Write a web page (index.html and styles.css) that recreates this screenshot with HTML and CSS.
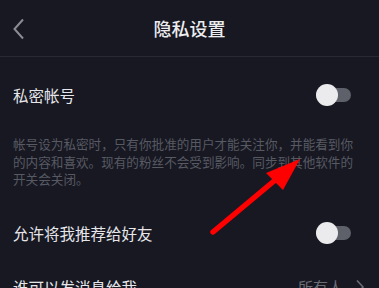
FILE: index.html
```html
<!DOCTYPE html>
<html lang="zh">
<head>
<meta charset="utf-8">
<link rel="stylesheet" href="styles.css">
</head>
<body>
<div class="page">
  <header class="topbar">
    <svg class="back" width="14" height="22" viewBox="0 0 14 22"><path d="M11 1.5 L2.5 11 L11 20.5" fill="none" stroke="#8b8c93" stroke-width="2"/></svg>
    <div class="title">隐私设置</div>
  </header>
  <div class="row first">
    <span class="label">私密帐号</span>
    <span class="toggle"><span class="knob"></span></span>
  </div>
  <p class="desc">帐号设为私密时，只有你批准的用户才能关注你，并能看到你的内容和喜欢。现有的粉丝不会受到影响。同步到其他软件的开关会关闭。</p>
  <div class="row second">
    <span class="label">允许将我推荐给好友</span>
    <span class="toggle"><span class="knob"></span></span>
  </div>
  <div class="row third">
    <span class="label">谁可以发消息给我</span>
    <span class="value">所有人<svg class="chev" width="10" height="16" viewBox="0 0 10 16"><path d="M2 1.5 L8 8 L2 14.5" fill="none" stroke="#6b6d75" stroke-width="1.6"/></svg></span>
  </div>
  <svg class="arrow" width="379" height="288" viewBox="0 0 379 288">
    <line x1="213" y1="232" x2="280" y2="176" stroke="#ff0000" stroke-width="5.5" stroke-linecap="round"/>
    <polygon points="300,159 266,173 283,190" fill="#ff0000"/>
  </svg>
</div>
</body>
</html>
```
FILE: styles.css
```css
html, body {
  margin: 0;
  padding: 0;
  background: #171822;
}
.page {
  position: relative;
  width: 379px;
  height: 288px;
  overflow: hidden;
  background: #171822;
  font-family: "Noto Sans CJK SC", "Noto Sans", sans-serif;
}
.topbar {
  position: relative;
  height: 56px;
  border-bottom: 1px solid #282a33;
  display: flex;
  align-items: center;
  justify-content: center;
}
.back {
  position: absolute;
  left: 12px;
  top: 18px;
}
.title {
  color: #ededf0;
  font-size: 18px;
  font-weight: 500;
}
.row {
  display: flex;
  align-items: center;
  justify-content: space-between;
  height: 40px;
  padding: 0 28px 0 13px;
}
.row.first { margin-top: 18px; }
.row.second { margin-top: 25px; }
.row.third { margin-top: 14px; padding-right: 14px; }
.label {
  color: #e6e6ea;
  font-size: 15.5px;
}
.toggle {
  position: relative;
  width: 35px;
  height: 14px;
  border-radius: 7px;
  background: #5f616a;
  display: inline-block;
}
.knob {
  position: absolute;
  left: 0;
  top: -4px;
  width: 22px;
  height: 22px;
  border-radius: 50%;
  background: #ebebed;
}
.desc {
  margin: 20px 0 0 0;
  padding: 0 24px 0 13px;
  color: #585a63;
  font-size: 12.6px;
  line-height: 17.5px;
}
.value {
  color: #6b6d75;
  font-size: 15px;
  display: flex;
  align-items: center;
  gap: 12px;
}
.arrow {
  position: absolute;
  left: 0;
  top: 0;
  pointer-events: none;
}
```
